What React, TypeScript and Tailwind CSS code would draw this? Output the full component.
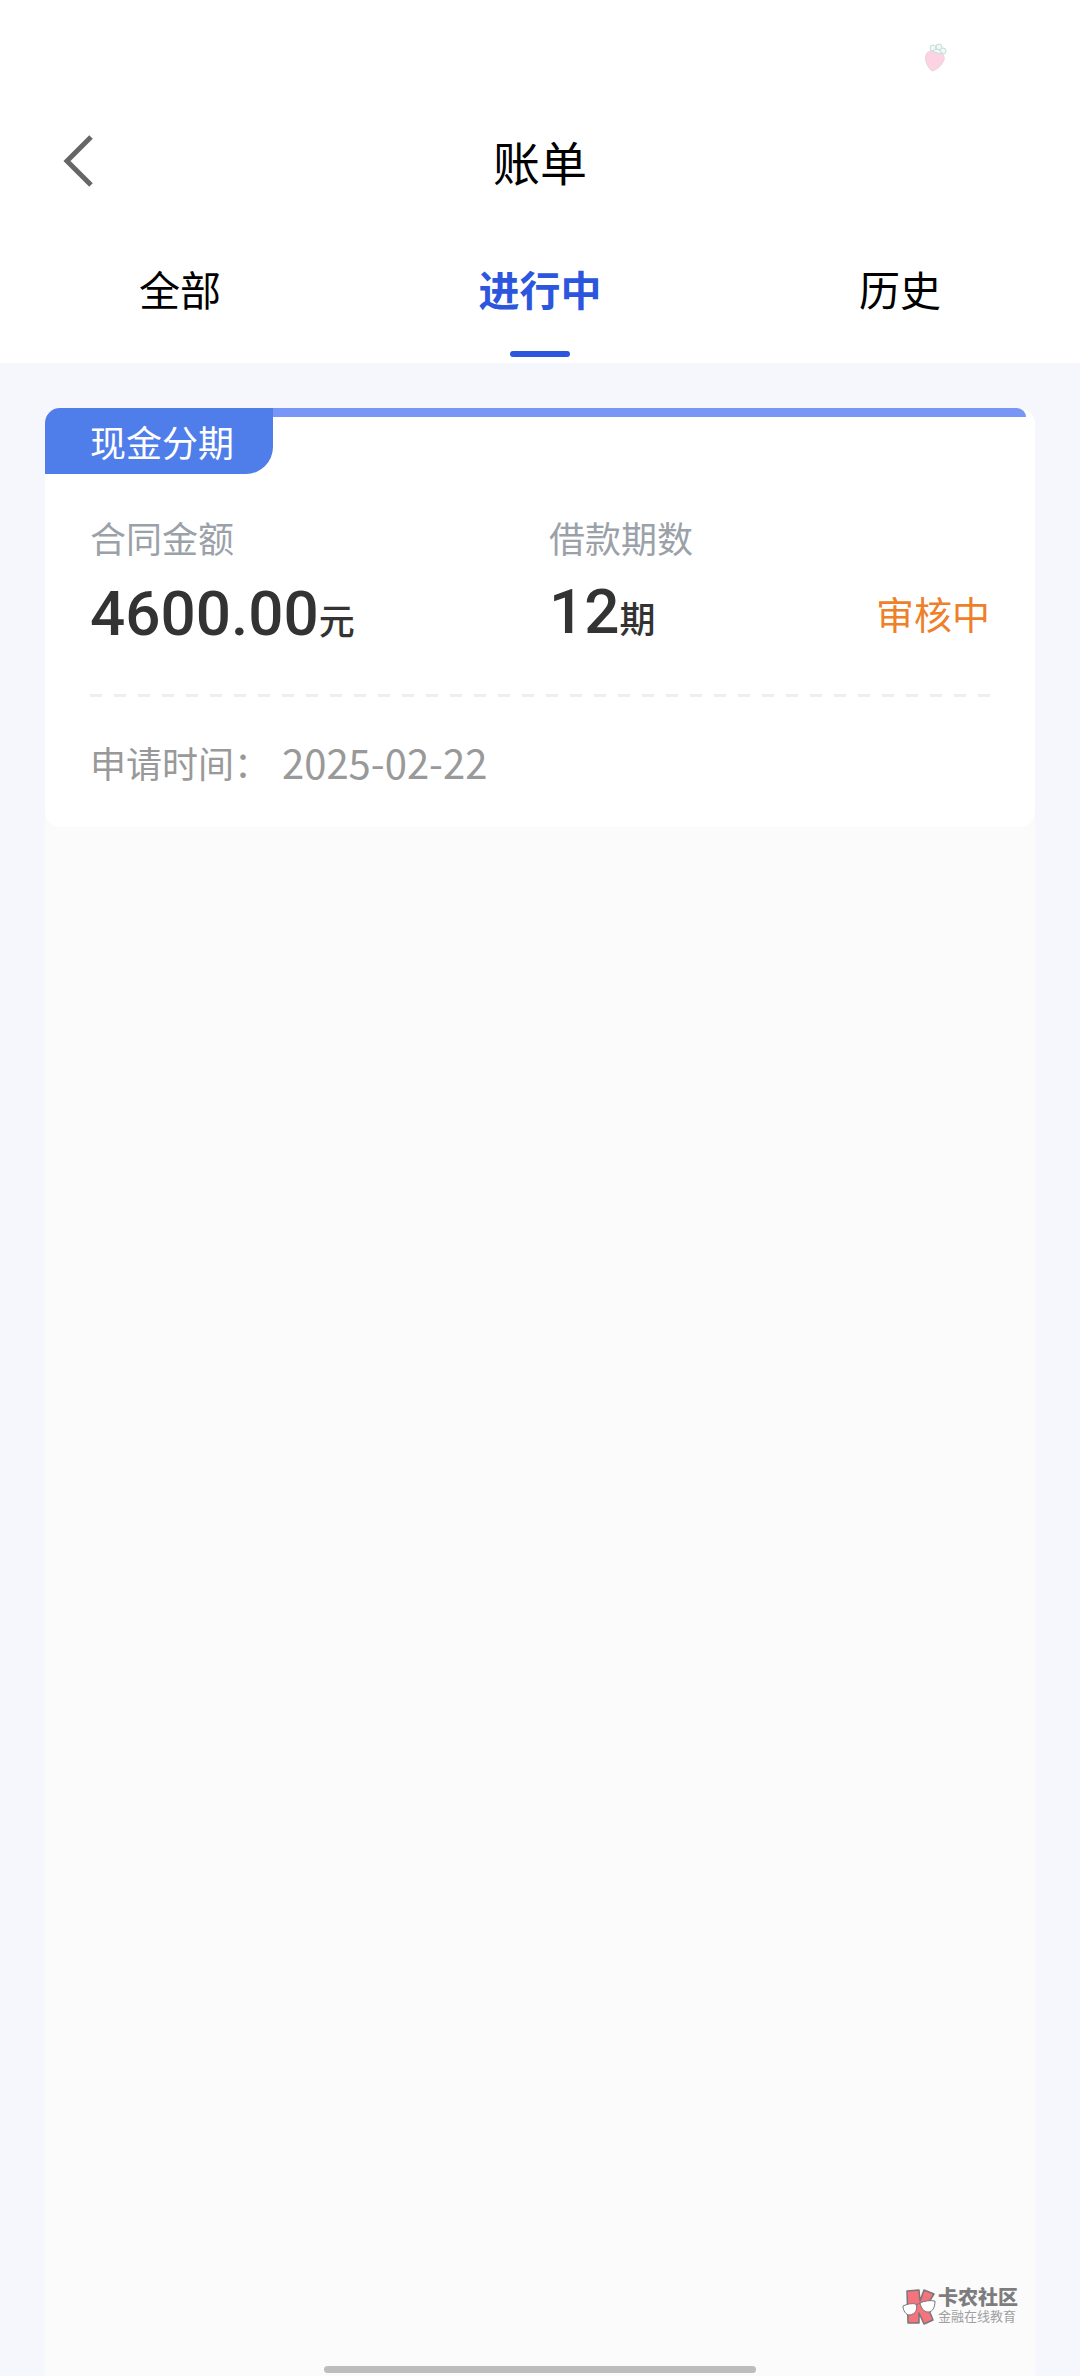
import React, { useState } from 'react'

const tabs = ['全部', '进行中', '历史']

type Bill = {
  type: string
  amount: string
  periods: number
  status: string
  date: string
}

const bills: Bill[] = [
  { type: '现金分期', amount: '4600.00', periods: 12, status: '审核中', date: '2025-02-22' },
]

function Strawberry() {
  return (
    <svg width="24" height="30" viewBox="0 0 24 30" fill="none">
      <path d="M3 10C6 7 10 7 13 8c5 1 8 4 7 9-2 5-7 10-12 11C4 25 -1 16 3 10Z" fill="#fdd3e3" stroke="#e6d3dc" />
      <g fill="#f1f8f6" stroke="#c3dcd8">
        <ellipse cx="9" cy="5" rx="3" ry="3" />
        <ellipse cx="15" cy="4" rx="3" ry="3" />
        <ellipse cx="19" cy="8" rx="3" ry="3" />
        <path d="M9 8c3-3 7-2 9 2-3 1-7 0-9-2Z" />
      </g>
    </svg>
  )
}

function Watermark() {
  return (
    <div className="absolute right-[62px] bottom-[51px] flex items-center gap-[2px] font-['Liberation_Sans','Noto_Sans_CJK_SC',sans-serif] text-[#7d7d7f]">
      <svg width="34" height="36" viewBox="0 0 34 36" stroke="#77777a" strokeLinejoin="round">
        <path d="M5 2l12-1 1 11 4-11 10 4-7 11 6 15-9 4-5-11v10H6Z" fill="#f4737d" strokeWidth="1.5" />
        <path d="M1 17c4-2 9-3 13-2 2 6-1 10-6 11-4 0-7-4-7-9Z" fill="#fff" />
        <path d="M18 14c4-2 10-3 15-2 0 6-2 11-7 11-4 0-7-4-8-9Z" fill="#fff" />
        <path d="M14 16l4-2" />
      </svg>
      <div>
        <p className="text-[20px] leading-[19px] font-black">卡农社区</p>
        <p className="text-[13px] leading-[17px] text-[#a0a0a2]">金融在线教育</p>
      </div>
    </div>
  )
}

function BillCard({ type, amount, periods, status, date }: Bill) {
  return (
    <article className="rounded-2xl bg-white pb-[36px]">
      <div className="relative mr-[9px] h-[66px]">
        <div className="ml-4 h-[9px] rounded-tr-[9px] bg-[#7796f6]"></div>
        <h2 className="absolute top-0 left-0 h-[66px] rounded-tl-[15px] rounded-br-[27px] bg-[#4f7eea] pr-[39px] pl-[45px] text-[36px] leading-[66px] text-white">
          {type}
        </h2>
      </div>
      <div className="mx-[45px] flex pt-[36px]">
        <div className="w-[459px]">
          <p className="text-[36px] leading-[54px] text-[#9ba1a9]">合同金额</p>
          <p className="flex items-baseline text-[#333333]">
            <span className="font-[Roboto] text-[62px] leading-[100px] font-medium">{amount}</span>
            <span className="text-[36px] font-medium">元</span>
          </p>
        </div>
        <div className="flex-1">
          <p className="text-[36px] leading-[54px] text-[#9ba1a9]">借款期数</p>
          <p className="flex items-baseline text-[#333333]">
            <span className="font-[Roboto] text-[62px] leading-[96px] font-medium">{periods}</span>
            <span className="text-[36px] font-medium">期</span>
          </p>
        </div>
        <p className="pt-[74px] text-[38px] leading-[58px] text-[#ee7f2b]">{status}</p>
      </div>
      <div className="mx-[45px] mt-[30px] h-[3px] bg-[repeating-linear-gradient(90deg,#eeeeee_0px,#eeeeee_12px,transparent_12px,transparent_24px)]"></div>
      <p className="mx-[45px] mt-[36px] flex items-center gap-3 leading-[58px] text-[#999999]">
        <span className="text-[36px]">申请时间：</span>
        <time className="text-[40px]">{date}</time>
      </p>
    </article>
  )
}

function App() {
  const [active, setActive] = useState(1)
  return (
    <div className="relative flex min-h-screen flex-col bg-[#f5f7fc] font-['Noto_Sans_CJK_SC',sans-serif]">
      <header className="bg-white">
        <div className="flex h-[108px] items-center justify-end pt-2 pr-[132px]">
          <Strawberry />
        </div>
        <div className="grid h-[105px] grid-cols-3 items-center px-[62px]">
          <button type="button" aria-label="返回" className="w-8">
            <svg width="32" height="52" viewBox="0 0 32 52" fill="none" stroke="#666666" strokeWidth="5">
              <path d="M29 2L5 26l24 24" />
            </svg>
          </button>
          <h1 className="text-center text-[47px] leading-[72px] text-black">账单</h1>
        </div>
        <nav className="grid h-[150px] grid-cols-3">
          {tabs.map((tab, index) => (
            <button
              key={tab}
              type="button"
              onClick={() => setActive(index)}
              className={`flex flex-col items-center justify-between pt-[45px] pb-[6px] text-[41px] leading-[60px] ${active === index ? 'font-bold text-[#2b56dd]' : 'text-black'}`}
            >
              {tab}
              {active === index && <span className="h-[6px] w-[60px] rounded-full bg-[#2b56dd]"></span>}
            </button>
          ))}
        </nav>
      </header>
      <main className="mx-[45px] mt-[45px] flex-1 rounded-t-2xl bg-[#fbfbfb]">
        {bills.map((bill) => (
          <BillCard key={bill.date} {...bill} />
        ))}
      </main>
      <Watermark />
      <div className="absolute bottom-[3px] left-1/2 h-[7px] w-2/5 -translate-x-1/2 rounded-full bg-[#bdbdbd]"></div>
    </div>
  )
}

export default App
